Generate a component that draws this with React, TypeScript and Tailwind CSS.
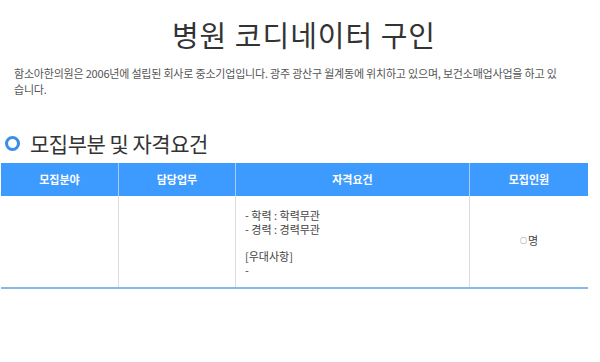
import React from "react";

const font = { fontFamily: '"Noto Sans CJK KR", "Noto Sans", sans-serif' };

export default function App() {
  return (
    <div className="w-[600px] h-[362px] bg-white text-[#333] overflow-hidden" style={font}>
      <h1 className="pt-[12px] text-center text-[29px] leading-[44px] text-[#333] tracking-[1px] pl-[8px]">
        병원 코디네이터 구인
      </h1>
      <p className="mt-[9px] pl-[14px] pr-[36px] text-[11px] leading-[16px] text-[#555] tracking-[-0.2px] break-all">
        함소아한의원은 2006년에 설립된 회사로 중소기업입니다. 광주 광산구 월계동에 위치하고 있으며, 보건소매업사업을 하고 있습니다.
      </p>
      <div className="mt-[32px] flex items-center gap-[10px] pl-[5px]">
        <span className="w-[15px] h-[15px] rounded-full border-[3px] border-[#3a8ee8]" />
        <h2 className="text-[21px] leading-[28px] text-[#333] tracking-[-0.5px]">모집부분 및 자격요건</h2>
      </div>
      <div className="mt-[6px] ml-[1px] w-[587px]">
        <div className="grid grid-cols-[118px_117px_234px_118px] h-[33px] bg-[#3d9bff] text-white text-[11px] font-bold">
          <div className="flex items-center justify-center border-r border-[#a9cdf5]">모집분야</div>
          <div className="flex items-center justify-center border-r border-[#a9cdf5]">담당업무</div>
          <div className="flex items-center justify-center border-r border-[#a9cdf5]">자격요건</div>
          <div className="flex items-center justify-center">모집인원</div>
        </div>
        <div className="grid grid-cols-[118px_117px_234px_118px] h-[93px] border-b-2 border-[#86b8ee] text-[11px] text-[#444]">
          <div className="border-r border-[#dcdcdc]" />
          <div className="border-r border-[#dcdcdc]" />
          <div className="border-r border-[#dcdcdc] pl-[9px] pt-[12px] leading-[14px]">
            <div>- 학력 : 학력무관</div>
            <div>- 경력 : 경력무관</div>
            <div className="mt-[13px]">[우대사항]</div>
            <div>-</div>
          </div>
          <div className="flex items-center justify-center pb-[2px]">
            <span className="text-[7px] mr-[1px]">○</span>명
          </div>
        </div>
      </div>
    </div>
  );
}
